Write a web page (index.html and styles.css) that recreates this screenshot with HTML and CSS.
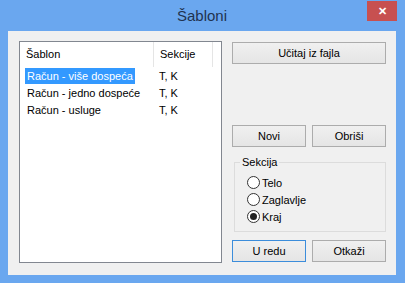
FILE: index.html
```html
<!DOCTYPE html>
<html lang="sr">
<head>
  <meta charset="UTF-8">
  <title>Šabloni</title>
  <link rel="stylesheet" href="styles.css">
</head>
<body>

  <!-- Dialog window -->
  <div class="window">
    <!-- Title bar -->
    <div class="title-bar">
      <div></div>
      <div class="title">Šabloni</div>
      <button class="close-btn">&#x2715;</button>
    </div>

    <!-- Client area -->
    <div class="client">
      <!-- Template list -->
      <div class="list-box">
        <div class="list-row list-header">
          <div class="col col-name">Šablon</div>
          <div class="col col-sec">Sekcije</div>
        </div>
        <div class="list-row">
          <div class="col col-name"><span class="item selected">Račun - više dospeća</span></div>
          <div class="col col-sec">T, K</div>
        </div>
        <div class="list-row">
          <div class="col col-name"><span class="item">Račun - jedno dospeće</span></div>
          <div class="col col-sec">T, K</div>
        </div>
        <div class="list-row">
          <div class="col col-name"><span class="item">Račun - usluge</span></div>
          <div class="col col-sec">T, K</div>
        </div>
      </div>

      <!-- Right side controls -->
      <div class="side">
        <button class="btn btn-wide">Učitaj iz fajla</button>

        <div class="btn-row btn-row-mid">
          <button class="btn">Novi</button>
          <button class="btn">Obriši</button>
        </div>

        <fieldset class="group">
          <legend>Sekcija</legend>
          <label class="radio"><span class="radio-dot"></span>Telo</label>
          <label class="radio"><span class="radio-dot"></span>Zaglavlje</label>
          <label class="radio"><span class="radio-dot checked"></span>Kraj</label>
        </fieldset>

        <div class="btn-row btn-row-bottom">
          <button class="btn btn-default">U redu</button>
          <button class="btn">Otkaži</button>
        </div>
      </div>
    </div>
  </div>

</body>
</html>
```

FILE: styles.css
```css
/* General Reset */
* {
  margin: 0;
  padding: 0;
  box-sizing: border-box;
  font-family: Tahoma, 'Liberation Sans', Arial, sans-serif;
}

body {
  background: #ffffff;
}

/* Window frame */
.window {
  width: 405px;
  height: 283px;
  background: #6aa7ef;
  padding: 0 9px 8px 8px;
  display: flex;
  flex-direction: column;
}

/* Title bar */
.title-bar {
  height: 31px;
  display: grid;
  grid-template-columns: 1fr auto 1fr;
  align-items: start;
}

.title {
  font-size: 15px;
  color: #1f3350;
  line-height: 30px;
  padding-top: 1px;
}

.close-btn {
  justify-self: end;
  width: 30px;
  height: 20px;
  margin-top: 1px;
  margin-right: -1px;
  background: #c75050;
  color: #ffffff;
  border: none;
  font-size: 11px;
  font-weight: bold;
  line-height: 20px;
}

/* Client area */
.client {
  flex: 1;
  background: #f0f0f0;
  display: flex;
  gap: 10px;
  padding: 10px 10px 12px 11px;
}

/* List box */
.list-box {
  width: 204px;
  height: 222px;
  background: #ffffff;
  border: 1px solid #828790;
  font-size: 11px;
  color: #000000;
}

.list-row {
  display: grid;
  grid-template-columns: 134px 59px;
  height: 17px;
  line-height: 17px;
}

.list-header {
  height: 25px;
  line-height: 25px;
  margin-bottom: 1px;
}

.list-header .col {
  border-right: 1px solid #e5e5e5;
  padding-left: 6px;
}

.col-sec {
  padding-left: 5px;
}

.col-name {
  padding-left: 5px;
}

.item {
  display: inline-block;
  line-height: 16px;
  padding: 0 2px;
}

.item.selected {
  background: #3399ff;
  color: #ffffff;
}

/* Right side */
.side {
  width: 154px;
  height: 222px;
  display: flex;
  flex-direction: column;
}

.btn {
  height: 22px;
  width: 74px;
  background: linear-gradient(#f0f0f0, #e5e5e5);
  border: 1px solid #acacac;
  font-size: 11px;
  color: #000000;
}

.btn-wide {
  width: 154px;
  margin-top: 1px;
}

.btn-default {
  border-color: #3c8ddb;
}

.btn-row {
  display: flex;
  justify-content: space-between;
}

.btn-row-mid {
  margin-top: 61px;
}

.btn-row-bottom {
  margin-top: auto;
  margin-bottom: 1px;
}

/* Group box */
.group {
  margin-top: 9px;
  margin-left: 2px;
  border: 1px solid #dcdcdc;
  padding: 5px 0 6px 0;
  font-size: 11px;
}

.group legend {
  margin-left: 5px;
  padding: 0 2px;
  line-height: 13px;
}

.radio {
  display: flex;
  align-items: center;
  height: 17px;
  gap: 2px;
  padding-left: 12px;
}

.radio-dot {
  width: 13px;
  height: 13px;
  border: 1px solid #333333;
  border-radius: 50%;
  background: #ffffff;
  display: flex;
  align-items: center;
  justify-content: center;
}

.radio-dot.checked::after {
  content: '';
  width: 7px;
  height: 7px;
  border-radius: 50%;
  background: #222222;
}
```
